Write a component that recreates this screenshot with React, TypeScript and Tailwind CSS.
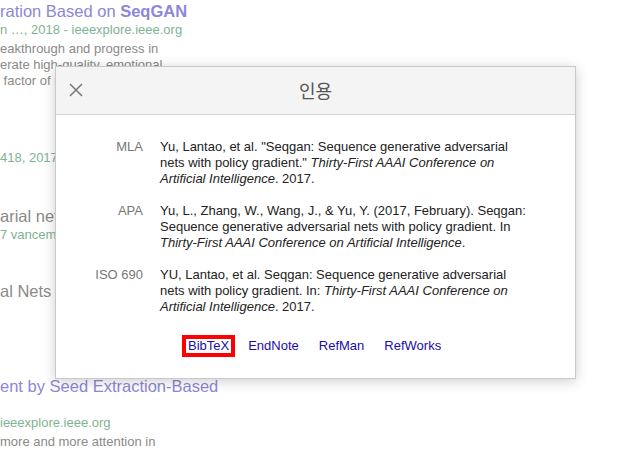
export default function App() {
  const entries = [
    {
      label: "MLA",
      body: (
        <>
          Yu, Lantao, et al. "Seqgan: Sequence generative adversarial nets with policy gradient."{" "}
          <i>Thirty-First AAAI Conference on Artificial Intelligence</i>. 2017.
        </>
      ),
    },
    {
      label: "APA",
      body: (
        <>
          Yu, L., Zhang, W., Wang, J., &amp; Yu, Y. (2017, February). Seqgan: Sequence generative adversarial nets
          with policy gradient. In <i>Thirty-First AAAI Conference on Artificial Intelligence</i>.
        </>
      ),
    },
    {
      label: "ISO 690",
      body: (
        <>
          YU, Lantao, et al. Seqgan: Sequence generative adversarial nets with policy gradient. In:{" "}
          <i>Thirty-First AAAI Conference on Artificial Intelligence</i>. 2017.
        </>
      ),
    },
  ];

  return (
    <div className="relative w-[635px] h-[449px] overflow-hidden bg-white font-['Liberation_Sans',Arial,sans-serif]">
      {/* faded results page behind the dialog */}
      <div className="flex flex-col whitespace-nowrap">
        <div className="text-[16.5px] leading-[22px] text-[#8c87d8]">
          ration Based on <b>SeqGAN</b>
        </div>
        <div className="text-[13px] leading-[16px] text-[#80b392]">n …, 2018 - ieeexplore.ieee.org</div>
        <div className="mt-[3px] text-[13px] leading-[16px] text-[#8a8a8a]">
          <div>eakthrough and progress in</div>
          <div>erate high-quality, emotional</div>
          <div>&nbsp;factor of research</div>
        </div>

        <div className="mt-[61px] text-[13px] leading-[16px] text-[#80b392]">418, 2017 - papers.nips.cc</div>

        <div className="mt-[39px] text-[16.5px] leading-[22px] text-[#8a8a8a]">arial nets</div>
        <div className="text-[13px] leading-[16px] text-[#80b392]">7 vancements</div>

        <div className="mt-[37px] text-[16.5px] leading-[22px] text-[#8a8a8a]">al Nets</div>

        <div className="mt-[73px] text-[16.5px] leading-[22px] text-[#8c87d8]">ent by Seed Extraction-Based</div>
        <div className="mt-[18px] text-[13px] leading-[16px] text-[#80b392]">ieeexplore.ieee.org</div>
        <div className="mt-[3px] text-[13px] leading-[16px] text-[#8a8a8a]">more and more attention in</div>
      </div>

      {/* citation dialog */}
      <div className="absolute left-[55px] top-[66px] w-[521px] h-[313px] bg-white border border-[#c9c9c9] shadow-[0_2px_12px_rgba(0,0,0,0.2)] flex flex-col">
        <div className="relative h-[48px] shrink-0 bg-[#f4f4f4] border-b border-[#d2d2d2] flex items-center justify-center">
          <button className="absolute left-[13px] top-[16px] w-[14px] h-[14px]">
            <svg viewBox="0 0 14 14" className="w-[14px] h-[14px]">
              <path d="M1 1L13 13M13 1L1 13" stroke="#777" strokeWidth="1.5" fill="none" />
            </svg>
          </button>
          <span className="text-[18px] text-[#555] font-['Noto_Sans_CJK_KR',sans-serif]">인용</span>
        </div>

        <div className="flex flex-col gap-[16px] pt-[24px] text-[13px] leading-[16px]">
          {entries.map((e) => (
            <div key={e.label} className="flex">
              <div className="w-[87px] shrink-0 text-right text-[#777]">{e.label}</div>
              <div className="ml-[17px] w-[370px] text-[#222]">{e.body}</div>
            </div>
          ))}
        </div>

        <div className="mt-[20px] pl-[126px] flex items-center text-[13px] text-[#1a0dab]">
          <a className="border-4 border-[#ff0000] px-[2px] leading-[14px]">BibTeX</a>
          <a className="ml-[13px]">EndNote</a>
          <a className="ml-[20px]">RefMan</a>
          <a className="ml-[20px]">RefWorks</a>
        </div>
      </div>
    </div>
  );
}
